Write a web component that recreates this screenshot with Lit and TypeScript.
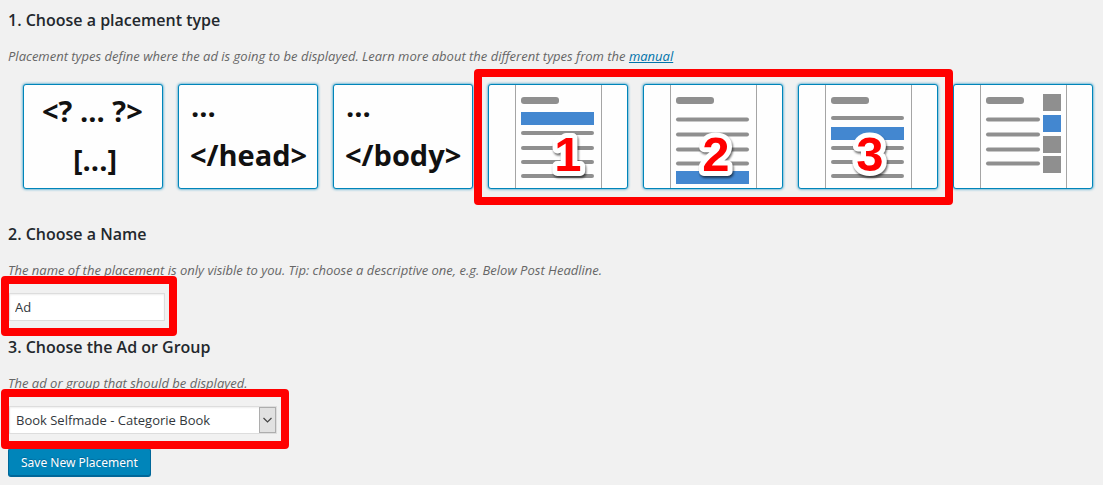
import { LitElement, html, svg, css, nothing } from "lit";
import { customElement, property, state } from "lit/decorators.js";

interface Placement {
  id: string;
  label: string;
  art: unknown;
  mark?: unknown;
}

const BLUE = "#4387d0";
const GREY = "#8f8f8f";

const pageFrame = svg`
  <path d="M27.5 0V105M113.5 0V105" stroke="#a5a5a5" stroke-width="1" fill="none"/>
  <rect x="33" y="13" width="38" height="7" rx="3" fill=${GREY}/>`;

const textLines = (rows: number[], end = 104) =>
  rows.map((y) => svg`<path d="M35 ${y}H${end}" stroke=${GREY} stroke-width="4" stroke-linecap="round"/>`);

const banner = (y: number) => svg`<rect x="33" y=${y} width="73" height="13" fill=${BLUE}/>`;

const mark = (n: string, x: number) => svg`<text class="mark" x=${x} y="87">${n}</text>`;

const code = (items: [string, number, number][]) =>
  items.map(([t, x, y]) => svg`<text class="code" x=${x} y=${y}>${t}</text>`);

const before: Placement[] = [
  { id: "default", label: "Manual placement", art: code([["<? ... ?>", 19, 38], ["[...]", 50, 87]]) },
  { id: "header", label: "Header code", art: code([["...", 13, 33], ["</head>", 12, 82]]) },
  { id: "footer", label: "Footer code", art: code([["...", 13, 33], ["</body>", 12, 82]]) },
];

const numbered: Placement[] = [
  {
    id: "post_top",
    label: "Before content",
    art: svg`${pageFrame}${banner(28)}${textLines([49, 64, 78, 92])}`,
    mark: mark("1", 80),
  },
  {
    id: "post_bottom",
    label: "After content",
    art: svg`${pageFrame}${textLines([35.5, 50.5, 65.5, 79.5])}${banner(87)}`,
    mark: mark("2", 73),
  },
  {
    id: "post_content",
    label: "Content",
    art: svg`${pageFrame}${textLines([34, 64, 78, 92])}${banner(43)}`,
    mark: mark("3", 72),
  },
];

const after: Placement[] = [
  {
    id: "sidebar",
    label: "Sidebar widget",
    art: svg`${pageFrame}${textLines([35.5, 50.5, 65.5, 79.5], 85)}
      ${[10, 31, 52, 72].map(
        (y, i) => svg`<rect x="90" y=${y} width="18" height="17" fill=${i === 1 ? BLUE : GREY}/>`
      )}`,
  },
];

@customElement("placement-card")
export class PlacementCard extends LitElement {
  @property({ attribute: false }) placement!: Placement;
  @property({ type: Boolean }) checked = false;

  static styles = css`
    :host {
      display: block;
    }
    .card {
      position: relative;
      display: block;
      cursor: pointer;
    }
    .radio {
      position: absolute;
      inset: 0;
      margin: 0;
      opacity: 0;
    }
    .art {
      display: block;
      box-sizing: border-box;
      width: 140px;
      height: 105px;
      background: #fefefe;
      border: 1px solid #0085ba;
      border-radius: 3px;
      box-shadow: 0 0 3px #0085ba;
    }
    .code {
      font: 700 29px "Open Sans", "Noto Sans", sans-serif;
      fill: #111;
    }
    .mark {
      font: bold 49px "Liberation Sans", Arial, sans-serif;
      text-anchor: middle;
      fill: #f00;
      stroke: #fff;
      stroke-width: 10px;
      stroke-linejoin: round;
      paint-order: stroke;
      filter: drop-shadow(1px 2px 1px rgba(0, 0, 0, 0.6));
    }
  `;

  render() {
    const p = this.placement;
    return html`<label class="card">
      <input class="radio" type="radio" name="placement-type" value=${p.id} aria-label=${p.label} ?checked=${this.checked} />
      <svg class="art" viewBox="1 1 138 103" aria-hidden="true">${p.art}${p.mark ?? nothing}</svg>
    </label>`;
  }
}

@customElement("app-root")
export class AppRoot extends LitElement {
  @state() private name = "Ad";

  static styles = css`
    :host {
      display: block;
      box-sizing: border-box;
      min-height: 100vh;
      padding: 8px;
      background: #f1f1f1;
      color: #23282d;
      font: 13px/20px "Open Sans", "Noto Sans", sans-serif;
    }
    .title {
      margin: 0 0 14px;
      font-size: 16px;
      line-height: 24px;
      font-weight: 600;
    }
    .hint {
      margin: 0;
      color: #666;
      font-style: italic;
    }
    .hint a {
      color: #0073aa;
    }
    .types {
      display: flex;
      flex-wrap: wrap;
      gap: 15px;
      margin: 18px 0 33px 15px;
    }
    .group {
      position: relative;
      display: flex;
      gap: 15px;
    }
    .frame {
      position: absolute;
      z-index: 1;
      inset: -15px -15px -16px -14px;
      border: 8px solid #f00;
      border-radius: 4px;
      pointer-events: none;
    }
    .field {
      position: relative;
      display: grid;
      width: max-content;
      margin: 13px 0 14px 1px;
    }
    .field .frame {
      inset: -17px -12px -15px -8px;
    }
    .text,
    .select {
      grid-area: 1 / 1;
      box-sizing: border-box;
      height: 28px;
      margin: 0;
      border: 1px solid #ddd;
      border-radius: 0;
      background: #fff;
      box-shadow: inset 0 1px 2px rgba(0, 0, 0, 0.07);
      color: #32373c;
      font: inherit;
      outline: none;
    }
    .text {
      width: 156px;
      padding: 0 5px;
    }
    .select {
      width: 268px;
      padding: 0 24px 0 6px;
      appearance: none;
    }
    .arrow {
      grid-area: 1 / 1;
      justify-self: end;
      box-sizing: border-box;
      width: 17px;
      height: 26px;
      margin: 1px;
      border: 1px solid #adadad;
      background: #e1e1e1;
      pointer-events: none;
    }
    .save {
      display: block;
      box-sizing: border-box;
      height: 29px;
      padding: 0 12px;
      border: 1px solid #006799;
      border-top-color: #0073aa;
      border-radius: 3px;
      background: #0085ba;
      box-shadow: inset 0 -1px 0 #006799;
      color: #fff;
      font: 12px "Noto Sans", "Open Sans", sans-serif;
      text-shadow: 0 -1px 1px #006799;
      cursor: pointer;
    }
  `;

  private cards(list: Placement[]) {
    return list.map((p) => html`<placement-card .placement=${p}></placement-card>`);
  }

  render() {
    return html`
      <section>
        <h3 class="title">1. Choose a placement type</h3>
        <p class="hint">
          Placement types define where the ad is going to be displayed. Learn more about the different types from the
          <a href="#manual">manual</a>
        </p>
        <div class="types">
          ${this.cards(before)}
          <div class="group">
            ${this.cards(numbered)}
            <div class="frame"></div>
          </div>
          ${this.cards(after)}
        </div>
      </section>
      <section>
        <h3 class="title" id="name-title">2. Choose a Name</h3>
        <p class="hint">
          The name of the placement is only visible to you. Tip: choose a descriptive one, e.g. Below Post Headline.
        </p>
        <div class="field">
          <input
            class="text"
            type="text"
            aria-labelledby="name-title"
            .value=${this.name}
            @input=${(e: Event) => (this.name = (e.target as HTMLInputElement).value)}
          />
          <div class="frame"></div>
        </div>
      </section>
      <section>
        <h3 class="title" id="item-title">3. Choose the Ad or Group</h3>
        <p class="hint">The ad or group that should be displayed.</p>
        <div class="field">
          <select class="select" aria-labelledby="item-title">
            <option>Book Selfmade - Categorie Book</option>
          </select>
          <svg class="arrow" viewBox="0 0 15 24" aria-hidden="true">
            <path d="M3.5 10L7.5 14L11.5 10" fill="none" stroke="#444" stroke-width="1.2" />
          </svg>
          <div class="frame"></div>
        </div>
      </section>
      <button class="save" type="button">Save New Placement</button>
    `;
  }
}
